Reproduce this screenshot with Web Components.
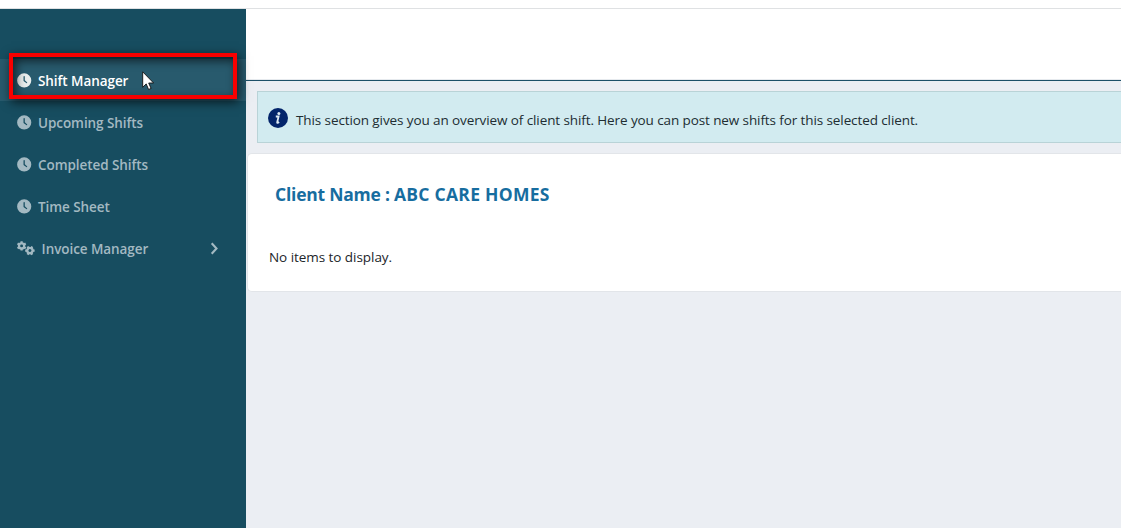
<!DOCTYPE html>
<html lang="en">
<head>
<meta charset="utf-8">
<title>Shift Manager</title>
<style>
html,body{margin:0;height:100%;overflow:hidden}
body{font-family:"Open Sans","Noto Sans",sans-serif;background:#ebeef3}
</style>
</head>
<body>
<shift-app></shift-app>
<script>
function define(name, html){
  const t=document.createElement('template');
  t.innerHTML=html;
  customElements.define(name, class extends HTMLElement{
    constructor(){super();this.attachShadow({mode:'open'}).append(t.content.cloneNode(true));}
  });
}
define('clock-icon',`<style>:host{display:block;width:15px;height:15px}svg{display:block}</style>
<svg width="15" height="15" viewBox="0 0 15 15"><path fill="currentColor" fill-rule="evenodd" d="M7.2.3a7.1 7.1 0 1 1 0 14.2 7.1 7.1 0 0 1 0-14.2zM6.5 3.4v4.2c0 .25.1.45.3.6l2.5 1.9c.6.4 1.2-.4.7-.9L7.8 7.3V3.4c0-.7-1.3-.7-1.3 0z"/></svg>`);
define('gears-icon',`<style>:host{display:block;width:18px;height:15px;margin-right:.6px}svg{display:block}</style>
<svg width="18" height="15" viewBox="0 0 18 15" fill="none" stroke="currentColor">
<g transform="translate(4.6 4.9)"><circle r="2.6" stroke-width="2.3"/><path stroke-width="2.2" d="M0-4.7v1.8M0 4.7V2.9M4.1-2.35l-1.6.9M-4.1 2.35l1.6-.9M4.1 2.35l-1.6-.9M-4.1-2.35l1.6.9"/></g>
<g transform="translate(12.9 9.6) rotate(30)"><circle r="2.6" stroke-width="2.3"/><path stroke-width="2.2" d="M0-4.7v1.8M0 4.7V2.9M4.1-2.35l-1.6.9M-4.1 2.35l1.6-.9M4.1 2.35l-1.6-.9M-4.1-2.35l1.6.9"/></g></svg>`);
define('chevron-icon',`<style>:host{display:block}svg{display:block}</style>
<svg width="8" height="13" viewBox="0 0 8 13"><path d="M1.7 1.2 6.5 6.5 1.7 11.8" fill="none" stroke="currentColor" stroke-width="2.1"/></svg>`);
define('info-icon',`<style>:host{display:block}svg{display:block}</style>
<svg width="20" height="20" viewBox="0 0 20 20"><circle cx="10" cy="10" r="10" fill="#02246a"/><circle cx="10.9" cy="5.4" r="1.5" fill="#dce9f3"/><path d="M7.8 8.5h2.8L9.2 14.2c-.2.9.6.8 1.9-.2" fill="none" stroke="#dce9f3" stroke-width="1.8"/></svg>`);
define('nav-item',`<style>
:host{display:flex;box-sizing:border-box;height:42px;padding:0 28px 0 17px;align-items:center;color:#a3b9c2;font-size:13.5px;font-weight:600;line-height:20px}
:host([active]){background:#285a6d;color:#fff}
.i{display:flex}
:host([active]) .i{color:#e9edec}
.t{margin-left:6px;padding-top:2px;flex:1;white-space:nowrap;letter-spacing:-.07px}
</style><span class="i"><slot name="icon"></slot></span><span class="t"><slot></slot></span><slot name="end"></slot>`);
define('side-nav',`<style>
:host{display:block;box-sizing:border-box;width:246px;padding-top:50px;background:#174d60}
</style><slot></slot>`);
define('focus-frame',`<style>
:host{position:absolute;left:9px;top:53px;width:228px;height:46px;box-sizing:border-box;border:4px solid #f80000;box-shadow:2px 3px 10px rgba(0,0,0,.7),inset 3px 4px 10px rgba(0,0,0,.6);pointer-events:none}
</style>`);
define('mouse-pointer',`<style>:host{position:absolute;left:142px;top:71px}svg{display:block}</style>
<svg width="13" height="20" viewBox="0 0 13 20"><path d="M.7.8v15.5l3.5-3.4 2.4 5.6 2.5-1.1-2.4-5.4h4.9z" fill="#fff" stroke="#111" stroke-width=".9"/></svg>`);
define('info-alert',`<style>
:host{display:flex;box-sizing:border-box;height:52px;margin:10px 0 0 11px;padding:0 0 0 10px;border:1px solid #b9d3d7;border-right:0;background:#d2ebf0;color:#212d32;font-size:13.5px;line-height:20px;align-items:center}
info-icon{margin:1px 8px 0 0}
.t{padding-top:6px;white-space:nowrap;letter-spacing:-.1px}
</style><info-icon></info-icon><span class="t"><slot></slot></span>`);
define('client-card',`<style>
:host{display:block;box-sizing:border-box;height:139px;margin:10px 0 0 1px;border:1px solid #e2e5e9;border-right:0;border-radius:5px 0 0 5px;background:#fff}
h2{margin:28px 0 0 27px;font-size:17.5px;line-height:24px;font-weight:700;color:#176d9f;white-space:nowrap;letter-spacing:-.23px}
h2 span{letter-spacing:.27px}
p{margin:41px 0 0 21px;font-size:13.5px;line-height:20px;color:#212529;white-space:nowrap;letter-spacing:-.05px}
</style><h2>Client Name : <span><slot name="client"></slot></span></h2><p><slot></slot></p>`);
define('shift-app',`<style>
:host{display:grid;grid-template:9px 1fr/246px 1fr;width:100%;height:100vh}
.top{grid-column:1/3;box-sizing:border-box;background:#fff;border-bottom:1px solid #dfe1e3}
main{min-width:0;background:#ebeef3}
header{box-sizing:border-box;height:72px;background:#fff;border-bottom:1px solid #1d5068;box-shadow:inset 0 -1px #e6eaee}
</style>
<div class="top"></div>
<side-nav>
<nav-item active><clock-icon slot="icon"></clock-icon>Shift Manager</nav-item>
<nav-item><clock-icon slot="icon"></clock-icon>Upcoming Shifts</nav-item>
<nav-item><clock-icon slot="icon"></clock-icon>Completed Shifts</nav-item>
<nav-item><clock-icon slot="icon"></clock-icon>Time Sheet</nav-item>
<nav-item><gears-icon slot="icon"></gears-icon>Invoice Manager<chevron-icon slot="end"></chevron-icon></nav-item>
</side-nav>
<main><header></header>
<info-alert>This section gives you an overview of client shift. Here you can post new shifts for this selected client.</info-alert>
<client-card><span slot="client">ABC CARE HOMES</span>No items to display.</client-card>
</main>
<focus-frame></focus-frame><mouse-pointer></mouse-pointer>`);
</script>
</body>
</html>
